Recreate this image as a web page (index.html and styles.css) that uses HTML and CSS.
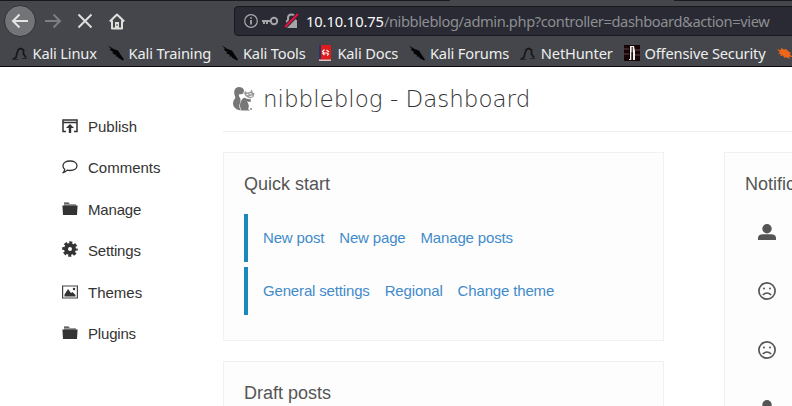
FILE: index.html
```html
<!DOCTYPE html>
<html lang="en">
<head>
<meta charset="utf-8">
<title>nibbleblog - Dashboard</title>
<link rel="stylesheet" href="styles.css">
</head>
<body>
<svg class="defs" width="0" height="0">
  <symbol id="dragon" viewBox="0 0 16 16"><path d="M0 .5 5.500 4 10 5.500 12.500 9.500 16 14.500 15 15.500 10.500 13 9.500 11.500 7.500 11.500 8 10 4.500 8.500 5 7 1.500 4.500 3 4Z" fill="#050505"/></symbol>
  <symbol id="kali" viewBox="0 0 16 16"><path d="M1 14 4 12.500 5 8 6.500 4.500 9 3.500 11.500 5 11.500 9 14 12.500" fill="none" stroke="#15171a" stroke-width="1.700"/><path d="M0 14.500H6M10 13.500H15" stroke="#25272b" stroke-width="1"/></symbol>
  <symbol id="folder" viewBox="0 0 16 14"><path d="M2 2V1H7L8 2H14V4H2Z" fill="#999"/><path d="M2 .5H6.500L7.500 1.500H2Z" fill="#333"/><path d="M.4 3.500H15.600L15 13H1Z" fill="#333"/></symbol>
  <symbol id="sad" viewBox="0 0 18 18"><circle cx="9" cy="9" r="8.100" fill="none" stroke="#555" stroke-width="1.700"/><circle cx="6" cy="6.500" r="1" fill="#555"/><circle cx="12" cy="6.500" r="1" fill="#555"/><path d="M4.800 13Q9 9 13.200 13" fill="none" stroke="#555" stroke-width="1.600"/></symbol>
  <symbol id="user" viewBox="0 0 18 16"><circle cx="9" cy="4.700" r="4.700" fill="#555"/><path d="M0 16V14Q0 10.500 5 10.300H13Q18 10.500 18 14V16Z" fill="#555"/></symbol>
</svg>
<header class="browser">
  <div class="toolbar">
    <span class="back"><svg width="18" height="16" viewBox="0 0 18 16"><path d="M17 8H2M8.500 1.500 2 8l6.500 6.500" fill="none" stroke="#e4e4e2" stroke-width="2"/></svg></span>
    <svg class="forward" width="18" height="16" viewBox="0 0 18 16"><path d="M1 8H16M9.500 1.500 16 8l-6.500 6.500" fill="none" stroke="#7d7e82" stroke-width="2"/></svg>
    <svg class="stop" width="16" height="16" viewBox="0 0 16 16"><path d="M1.500 1.500 14.500 14.500M14.500 1.500 1.500 14.500" stroke="#dedfdc" stroke-width="2"/></svg>
    <svg class="home" width="16" height="17" viewBox="0 0 16 17"><path d="M.8 8.500 8 1.500 15.200 8.500M3 7.500V15.500H13V7.500" fill="none" stroke="#e0e0dd" stroke-width="2" stroke-linejoin="round"/><path d="M6 15.500V9H10V15.500Z" fill="#e0e0dd"/><path d="M8 11v2" stroke="#44464c"/></svg>
    <div class="urlbar">
      <svg width="14" height="14" viewBox="0 0 14 14"><circle cx="7" cy="7" r="6.300" fill="none" stroke="#aaabae" stroke-width="1.200"/><path d="M7 6v4.500M7 3.200v1.600" stroke="#b5b6b8" stroke-width="1.600"/></svg>
      <svg class="key" width="17" height="10" viewBox="0 0 17 10"><circle cx="12" cy="5" r="3.200" fill="none" stroke="#a4a5a8" stroke-width="2"/><path d="M0 5H9M2 5V8M5 5V8" fill="none" stroke="#a4a5a8" stroke-width="2"/></svg>
      <svg class="lock" width="15" height="16" viewBox="0 0 15 16"><path d="M4 8V5Q4 1.500 7.500 1.500T11 5V8" fill="none" stroke="#a4a5a8" stroke-width="2"/><path d="M2 7H13V15H2Z" fill="#a4a5a8"/><path d="M1 14 14 1" stroke="#292a33" stroke-width="4"/><path d="M1 14 14 1" stroke="#f00f43" stroke-width="2"/></svg>
      <span class="url"><b>10.10.10.75</b>/nibbleblog/admin.php?controller=dashboard&amp;action=view</span>
    </div>
  </div>
  <nav class="bookmarks">
    <span><svg><use href="#kali"/></svg>Kali Linux</span>
    <span><svg><use href="#dragon"/></svg>Kali Training</span>
    <span><svg><use href="#dragon"/></svg>Kali Tools</span>
    <span><svg viewBox="0 0 16 16"><path d="M2 0H14V16H2Z" fill="#e01b1b"/><path d="M2 0H4V14H2Z" fill="#26356d"/><path d="M2 14.500H14V16H2Z" fill="#d8c6c6"/><path d="M7.500 4.500 5.500 6.500 7 8H10L11.500 9 10 10.500M9.500 5 12 7M5.500 8 7.500 10" fill="none" stroke="#fff" stroke-width="1.100"/></svg>Kali Docs</span>
    <span><svg><use href="#dragon"/></svg>Kali Forums</span>
    <span><svg><use href="#kali"/></svg>NetHunter</span>
    <span><svg viewBox="0 0 16 16"><path d="M0 0H16V16H0Z" fill="#170407"/><path d="M0 4H5M0 9H5M11 5H16M11 10H16" stroke="#4a3034" stroke-width="1.500"/><path d="M6 1H10L11 6V15H8.800V7H7.500V15H5V14H6V6Z" fill="#eee"/><path d="M8.200 2V15" stroke="#160407"/></svg>Offensive Security</span>
    <span><svg viewBox="0 0 16 16"><path d="M0 4.500 4 5 4 3 7 4.500 9 4 11 6 14 8 12.500 9 15.500 12 12 11.500 13 14 10 12.500 7 12.500 6 10.500 3 11 4 9 1 8.500 3 7Z" fill="#ef6519"/></svg></span>
  </nav>
</header>
<div class="page">
  <aside class="sidebar">
    <a><svg viewBox="0 0 16 14"><path d="M4 12.500H1V1H15V12.500H12M1 3.500H15" fill="none" stroke="#333" stroke-width="1.500"/><path d="M8 5 12 9H9.200V14H6.800V9H4Z" fill="#333"/></svg>Publish</a>
    <a><svg viewBox="0 0 16 14"><path d="M8 1C12 1 15 3 15 5.800S12 10.500 8 10.500C7 10.500 6 10.400 5.200 10.200Q3.500 12.200 1.300 12.500Q2.800 11 2.600 9.200C1.500 8.400 1 7.200 1 5.800 1 3 4 1 8 1Z" fill="none" stroke="#333" stroke-width="1.300"/></svg>Comments</a>
    <a><svg><use href="#folder"/></svg><span class="tight">Manage</span></a>
    <a><svg class="gear" viewBox="0 0 16 16"><circle cx="8" cy="8" r="4" fill="none" stroke="#333" stroke-width="4"/><circle cx="8" cy="8" r="6.500" fill="none" stroke="#333" stroke-width="2.600" stroke-dasharray="3 2.105" stroke-dashoffset="1.500"/></svg><span class="tight">Settings</span></a>
    <a><svg viewBox="0 0 16 14"><path d="M.6 1H15.400V13H.6Z" fill="none" stroke="#444" stroke-width="1.200"/><path d="M2.500 11.500V9.500L6 4 9 8 10.500 7 13.500 10V11.500Z" fill="#333"/><circle cx="12" cy="4" r="1.200" fill="#333"/></svg>Themes</a>
    <a><svg><use href="#folder"/></svg><span class="tight">Plugins</span></a>
  </aside>
  <main>
    <h1><svg width="24" height="26" viewBox="0 0 24 26"><path d="M3 10C1 5 3 1 7 1c5 0 6 4 4 6.500C9.500 9 8 7.500 7 8.500c-1 2 2 3 1.500 6C8 18 6 20 9 24.500 2 23.500 0 19 1.500 15c.5-2 2.500-2 1.500-5Z" fill="#777"/><path d="M9.500 24.500C7 20 8 16 10 13.500 11.500 11.500 13 11.500 14 12.500L19 13.500 18.500 16 15 15.500C17 18 17.500 21 16 23L18 24.500Z" fill="#777"/><path d="M13 5 15 6.500 18 6 20 3.500 20.500 6 22.500 7.500 21.500 11 18 12.500 14 10.500 12 7.500Z" fill="#999"/><path d="m14.500 8 2 1m1-1.500 2 .5m-2 2.500 3-.5" fill="none" stroke="#fff" stroke-width="1.200"/><circle cx="19" cy="23" r="1" fill="#888"/></svg>nibbleblog - Dashboard</h1>
    <div class="columns">
      <div class="primary">
        <section class="card quick">
          <h2>Quick start</h2>
          <div class="links"><a>New post</a><a>New page</a><a>Manage posts</a></div>
          <div class="links"><a>General settings</a><a>Regional</a><a>Change theme</a></div>
        </section>
        <section class="card draft"><h2>Draft posts</h2></section>
      </div>
      <section class="card notifications">
        <h2>Notifications</h2>
        <svg class="person"><use href="#user"/></svg>
        <svg><use href="#sad"/></svg>
        <svg><use href="#sad"/></svg>
        <svg class="person"><use href="#user"/></svg>
      </section>
    </div>
  </main>
</div>
</body>
</html>
```
FILE: styles.css
```css
* { box-sizing: border-box; }
body { margin: 0; width: 792px; height: 406px; overflow: hidden; background: #fff; font: 15px/20px "Liberation Sans", sans-serif; color: #333; }
svg { flex: none; display: block; }
.defs { position: absolute; }
.browser { height: 67px; background: linear-gradient(90deg, #191a21 450px, #44464c 450px 674px, #191a21 674px) 0 0 / 100% 1px no-repeat #44464c; border-bottom: 1px solid #09090b; font-family: "Noto Sans", sans-serif; overflow: hidden; }
.toolbar { height: 42px; display: flex; align-items: center; padding-left: 4px; }
.back { width: 32px; height: 32px; flex: none; border-radius: 50%; background: #737478; border: 1px solid #303137; display: flex; align-items: center; justify-content: center; }
.forward { margin-left: 8px; }
.stop { margin-left: 15px; }
.home { margin-left: 16px; }
.urlbar { margin-left: 109px; width: 570px; flex: none; height: 30px; border: 1px solid #17181d; border-radius: 4px; background: #292a33; display: flex; align-items: center; padding-left: 9px; }
.key { margin-left: 4px; }
.lock { margin-left: 5px; }
.url { margin-left: 7px; color: #8d8e92; font-size: 14.67px; letter-spacing: -.4px; white-space: nowrap; }
.url b { color: #f9f9fa; font-weight: 400; letter-spacing: -.09px; }
.bookmarks { display: flex; gap: 11.3px; padding-left: 12px; height: 21px; align-items: center; font-size: 14.67px; letter-spacing: -.17px; color: #eeeeec; }
.bookmarks span { display: flex; align-items: center; gap: 4.5px; white-space: nowrap; flex: none; }
.bookmarks svg { width: 16px; height: 16px; }
.page { display: flex; height: 339px; overflow: hidden; }
.sidebar { width: 223px; flex: none; padding: 50px 0 0 62px; display: flex; flex-direction: column; gap: 21.4px; }
.sidebar a { display: flex; align-items: center; height: 20px; gap: 10px; }
.sidebar svg { width: 16px; height: 14px; margin-top: -2px; }
.sidebar .gear { height: 16px; margin-top: -4px; }
.tight { letter-spacing: -.18px; }
main { width: 920px; flex: none; }
h1 { margin: 0; height: 65px; border-bottom: 1px solid #eee; display: flex; align-items: center; padding: 0 0 0 9px; gap: 7px; font: 200 23px/30px "DejaVu Sans Light", "DejaVu Sans", sans-serif; color: #333; white-space: nowrap; }
.columns { display: flex; gap: 60px; padding-top: 20px; }
.primary { width: 441px; flex: none; display: flex; flex-direction: column; gap: 20px; }
.card { background: #fdfdfd; border: 1px solid #f1f1f1; padding: 20px; }
.quick { height: 189px; }
.draft { height: 189px; }
h2 { margin: 0 0 19px; font-size: 18px; line-height: 22px; font-weight: 400; color: #555; }
.links { display: flex; align-items: center; gap: 15px; height: 48px; border-left: 4px solid #1c87bc; padding-left: 15px; margin-bottom: 5px; color: #428bca; letter-spacing: -.16px; }
.notifications { width: 300px; height: 400px; }
.notifications svg { width: 18px; height: 18px; margin: 0 0 41px 13px; }
.notifications .person { height: 16px; }
.notifications h2 { margin-bottom: 29px; }
.notifications h2 + .person { margin-bottom: 42px; }
```
